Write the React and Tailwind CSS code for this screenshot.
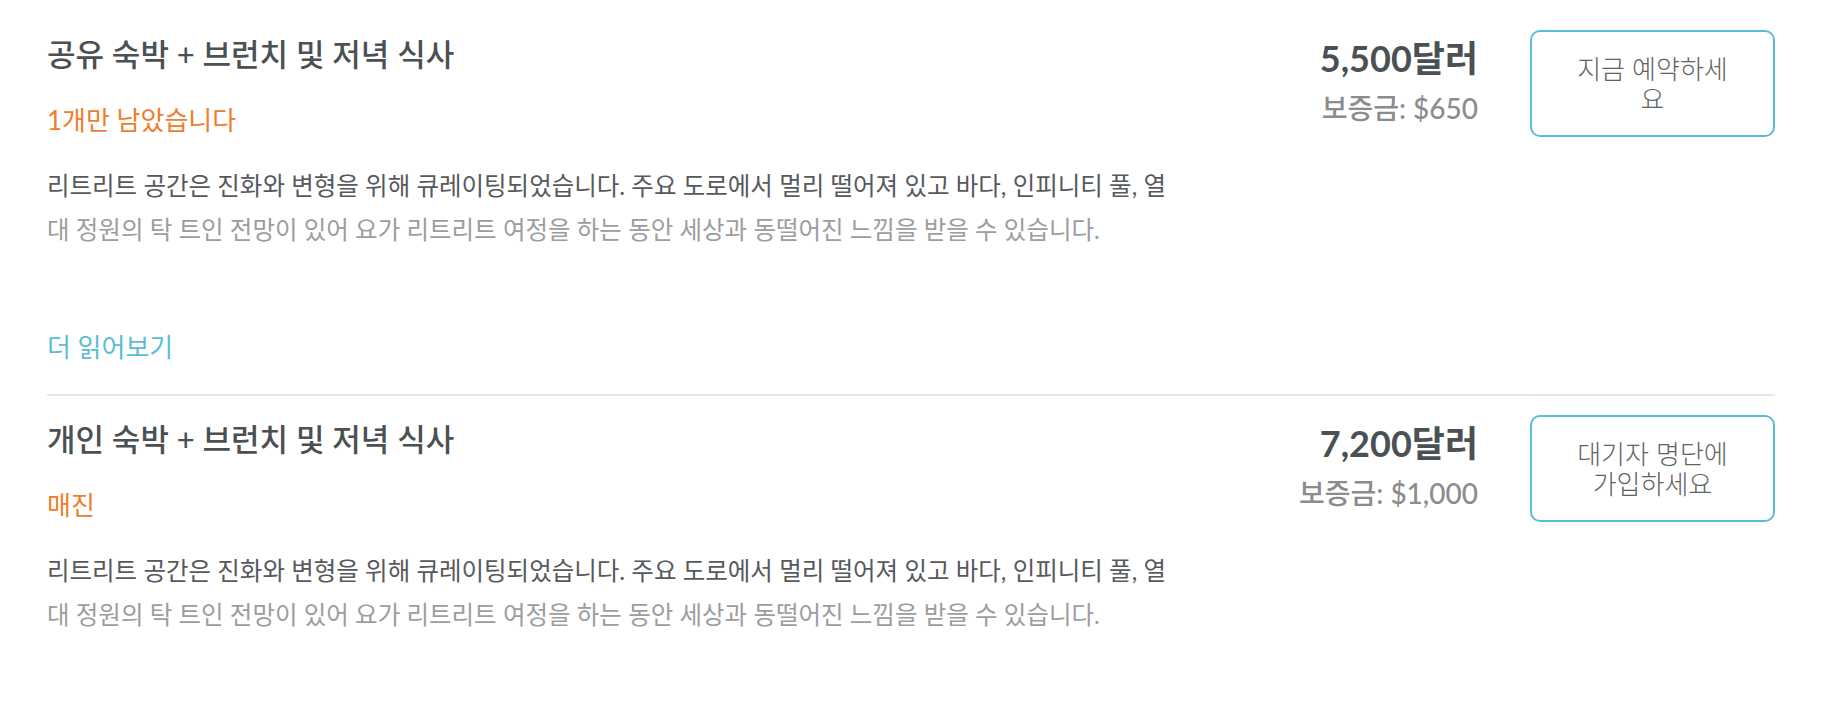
const font = { fontFamily: '"Lato", "Noto Sans CJK KR", sans-serif' }

const packages = [
  {
    id: 'shared',
    title: '공유 숙박 + 브런치 및 저녁 식사',
    status: '1개만 남았습니다',
    price: '5,500달러',
    deposit: '보증금: $650',
    action: '지금 예약하세요',
    readMore: true,
  },
  {
    id: 'private',
    title: '개인 숙박 + 브런치 및 저녁 식사',
    status: '매진',
    price: '7,200달러',
    deposit: '보증금: $1,000',
    action: '대기자 명단에 가입하세요',
    readMore: false,
  },
]

const PackageRow = ({ item, first }) => (
  <div
    className={`flex items-start ${first ? 'pt-[36px] pb-[31px] border-b-2 border-[#e6e6e6]' : 'pt-[25px]'}`}
  >
    <div className="flex-1 min-w-0">
      <h3 className="text-[31px] leading-[36px] font-medium text-[#4b5053]">{item.title}</h3>
      <p className="mt-[32px] text-[26px] leading-[32px] text-[#ef7d2c]">{item.status}</p>
      <p className="mt-[28px] text-[24.5px] leading-[44px]">
        <span className="block text-[#57595b]">
          리트리트 공간은 진화와 변형을 위해 큐레이팅되었습니다. 주요 도로에서 멀리 떨어져 있고 바다, 인피니티 풀, 열
        </span>
        <span className="block text-[#9c9d9e]">
          대 정원의 탁 트인 전망이 있어 요가 리트리트 여정을 하는 동안 세상과 동떨어진 느낌을 받을 수 있습니다.
        </span>
      </p>
      {item.readMore && (
        <a href="#" className="block mt-[79px] text-[26px] leading-[32px] text-[#5bbdd5]">
          더 읽어보기
        </a>
      )}
    </div>
    <div className="flex items-start gap-[52px] -mt-[6px]">
      <div className="text-right pt-[8px]">
        <div className="text-[36px] leading-[40px] font-bold text-[#4b5053]">{item.price}</div>
        <div className="mt-[14px] text-[28px] leading-[32px] font-medium text-[#8c8c8c]">{item.deposit}</div>
      </div>
      <button className="w-[245px] h-[107px] px-[38px] flex items-center justify-center border-2 border-[#5bbdd5] rounded-[10px] bg-white text-[26px] leading-[30px] font-light text-[#606366] text-center">
        {item.action}
      </button>
    </div>
  </div>
)

export default function App() {
  return (
    <div className="min-h-[704px] bg-white px-[47px]" style={font}>
      {packages.map((item, i) => (
        <PackageRow key={item.id} item={item} first={i === 0} />
      ))}
    </div>
  )
}
